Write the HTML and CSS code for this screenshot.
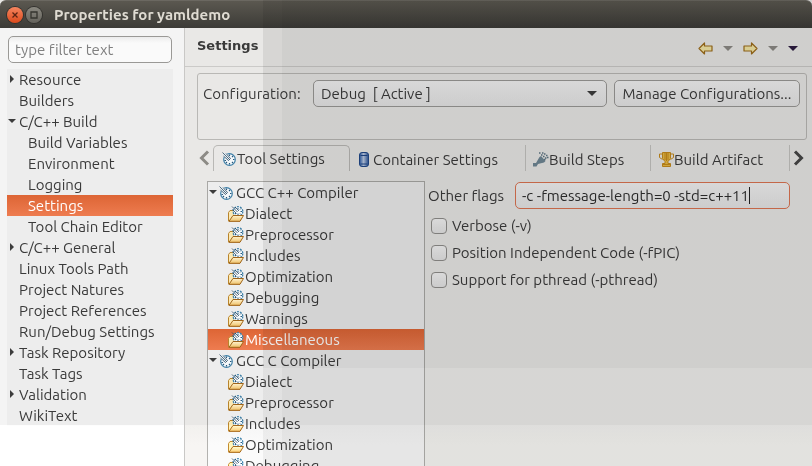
FILE: index.html
```html
<!DOCTYPE html>
<html lang="en">
<head>
    <meta charset="UTF-8">
    <meta name="viewport" content="width=device-width, initial-scale=1.0">
    <title>Properties for yamldemo</title>
    <link rel="stylesheet" href="styles.css">
</head>
<body>
    <!-- shared icons -->
    <svg width="0" height="0" class="sprite">
        <defs>
            <linearGradient id="paper" x1="0" y1="0" x2="0" y2="1">
                <stop offset="0" stop-color="#fff3cf"/>
                <stop offset="1" stop-color="#efc168"/>
            </linearGradient>
            <linearGradient id="can" x1="0" y1="0" x2="1" y2="0">
                <stop offset="0" stop-color="#2a5ca8"/>
                <stop offset=".45" stop-color="#b9c9e2"/>
                <stop offset="1" stop-color="#2a5499"/>
            </linearGradient>
            <symbol id="gauge" viewBox="0 0 14 14">
                <circle cx="7.5" cy="7.5" r="5.8" fill="#f4f8fa" stroke="#3f80a8" stroke-width="1.2"/>
                <path d="M7.5 2.5v1.5M7.5 11v1.5M2.5 8.5h1.5M11 7.5h1.5M4 11l1-1M10 10l1 1M10 5l1-1" stroke="#28587c" stroke-width="1.2"/>
                <path d="M1 1L5 1.5 9 6.500 6.500 9 1.500 4.500z" fill="#e4eef3"/>
                <path d="M.5.5L7.5 7.5M4 1.5L8.5 6.5M1.5 4L6.5 8.500M6.5 8.500L8.5 6.500" stroke="#2d4a62" stroke-width=".8" fill="none"/>
            </symbol>
            <symbol id="folder" viewBox="0 0 16 16">
                <path d="M.5 15V6.500l1.500-2h3l1 2h6V15z" fill="#fbe9b4" stroke="#b8842c"/>
                <circle cx="10" cy="5.500" r="4.800" fill="#f8fbfc" stroke="#3f80a8" stroke-width="1.300" stroke-dasharray="2 1"/>
                <path d="M10 2v1.500M10 7.500v1.500M12.500 5.500h1.500M12 3.500l1-1M12 7.500l1 1M7 7.500h1" stroke="#28587c"/>
                <path d="M4 .5L9.500 6M7 1L11 5M4.500 3.500L8.500 7.500" stroke="#2d4a62" stroke-width=".8" fill="none"/>
                <path d="M1 15.300L5 9.500h10.500L12 15.300z" fill="url(#paper)" stroke="#a0651a"/>
            </symbol>
            <symbol id="arrow" viewBox="0 0 15 13">
                <path d="M1 6.5L6.5 1v3H14v5H6.500v3z" fill="#f3e6a4" stroke="#9c6c1a" stroke-width="1.2" stroke-linejoin="round"/>
            </symbol>
        </defs>
    </svg>

    <header class="titlebar">
        <button class="win-btn close" aria-label="Close">
            <svg width="16" height="16" viewBox="0 0 16 16"><path d="M5.5 5.5l5 5M10.5 5.5l-5 5" stroke="#5c2413" stroke-width="1.3"/></svg>
        </button>
        <button class="win-btn" aria-label="Maximize">
            <svg width="16" height="16" viewBox="0 0 16 16"><path d="M5 5h6v6H5z" fill="none" stroke="#35342f" stroke-width="1.3"/></svg>
        </button>
        <h1>Properties for yamldemo</h1>
    </header>

    <div class="dialog">
        <aside class="sidebar">
            <input class="field filter" type="text" placeholder="type filter text" aria-label="Filter">
            <ul class="tree pages">
                <li class="closed">Resource</li>
                <li>Builders</li>
                <li class="open">C/C++ Build</li>
                <li class="child">Build Variables</li>
                <li class="child">Environment</li>
                <li class="child">Logging</li>
                <li class="child selected">Settings</li>
                <li class="child">Tool Chain Editor</li>
                <li class="closed">C/C++ General</li>
                <li>Linux Tools Path</li>
                <li>Project Natures</li>
                <li>Project References</li>
                <li>Run/Debug Settings</li>
                <li class="closed">Task Repository</li>
                <li>Task Tags</li>
                <li class="closed">Validation</li>
                <li>WikiText</li>
            </ul>
        </aside>

        <main class="content">
            <div class="page-head">
                <h2>Settings</h2>
                <div class="nav">
                    <button aria-label="Back"><svg width="15" height="13"><use href="#arrow"/></svg></button>
                    <button class="drop" aria-label="Back history"></button>
                    <button aria-label="Forward"><svg class="flip" width="15" height="13"><use href="#arrow"/></svg></button>
                    <button class="drop" aria-label="Forward history"></button>
                    <button class="drop dark" aria-label="Menu"></button>
                </div>
            </div>

            <div class="config">
                <label for="config">Configuration:</label>
                <div class="combo">
                    <select class="field" id="config">
                        <option>Debug&nbsp; [ Active ]</option>
                    </select>
                </div>
                <button class="field manage">Manage Configurations...</button>
            </div>

            <div class="tabs">
                <button class="scroll" aria-label="Previous tabs">
                    <svg width="11" height="16" viewBox="0 0 11 16"><path d="M9 1.5L2.5 8 9 14.5" fill="none" stroke="#8d8b86" stroke-width="3"/></svg>
                </button>
                <button class="tab active"><svg width="14" height="14"><use href="#gauge"/></svg>Tool Settings</button>
                <button class="tab container-tab">
                    <svg width="10" height="15" viewBox="0 0 10 15"><rect x=".5" y=".5" width="9" height="14" rx="2.5" fill="url(#can)" stroke="#1f4788"/><path d="M1.5 3.5h7M1.5 12h7" stroke="#1f4788"/></svg>
                    Container Settings
                </button>
                <button class="tab steps-tab">
                    <svg width="16" height="15" viewBox="0 0 16 15">
                        <path d="M0 14.5V11h3l3.5-6 1.5-1 4.5 5-1.5 1.5-6 1.5-1.5 2.5z" fill="#6f8794"/>
                        <path d="M6 1h1.5M9 1h1.5M8 3h1.5M11 2h1.5M10 4.5h1.5M13 3.5h1.5M12 6h1.5M14 5.5h1.5M11 7.5h1.5" stroke="#5d7482" stroke-width="1.4"/>
                    </svg>
                    Build Steps
                </button>
                <button class="tab artifact-tab">
                    <svg width="15" height="15" viewBox="0 0 15 15"><path d="M3.5.5h8v6L9 9.5v2h2.5v3h-8v-3H6v-2L3.5 6.5z" fill="#e8bb45" stroke="#c58a1b"/><path d="M3.5 2h-3v3.5l3 2M11.5 2h3v3.5l-3 2M6 1v7M9 1v7M7.5 1v8M4 12.5h7" fill="none" stroke="#c58a1b"/></svg>
                    Build Artifact
                </button>
                <button class="scroll next" aria-label="Next tabs">
                    <svg width="11" height="16" viewBox="0 0 11 16"><path d="M2 1.5L8.5 8 2 14.5" fill="none" stroke="#464646" stroke-width="3"/></svg>
                </button>
            </div>

            <div class="tool-settings">
                <ul class="tree tools">
                    <li class="open"><svg width="14" height="14"><use href="#gauge"/></svg>GCC C++ Compiler</li>
                    <li class="child"><svg width="16" height="16"><use href="#folder"/></svg>Dialect</li>
                    <li class="child"><svg width="16" height="16"><use href="#folder"/></svg>Preprocessor</li>
                    <li class="child"><svg width="16" height="16"><use href="#folder"/></svg>Includes</li>
                    <li class="child"><svg width="16" height="16"><use href="#folder"/></svg>Optimization</li>
                    <li class="child"><svg width="16" height="16"><use href="#folder"/></svg>Debugging</li>
                    <li class="child"><svg width="16" height="16"><use href="#folder"/></svg>Warnings</li>
                    <li class="child selected"><svg width="16" height="16"><use href="#folder"/></svg>Miscellaneous</li>
                    <li class="open"><svg width="14" height="14"><use href="#gauge"/></svg>GCC C Compiler</li>
                    <li class="child"><svg width="16" height="16"><use href="#folder"/></svg>Dialect</li>
                    <li class="child"><svg width="16" height="16"><use href="#folder"/></svg>Preprocessor</li>
                    <li class="child"><svg width="16" height="16"><use href="#folder"/></svg>Includes</li>
                    <li class="child"><svg width="16" height="16"><use href="#folder"/></svg>Optimization</li>
                    <li class="child"><svg width="16" height="16"><use href="#folder"/></svg>Debugging</li>
                </ul>

                <form class="options">
                    <div class="flags">
                        <label for="flags">Other flags</label>
                        <div class="field focused">
                            <input id="flags" type="text" value="-c -fmessage-length=0 -std=c++11">
                            <span class="caret"></span>
                        </div>
                    </div>
                    <label class="check"><input type="checkbox">Verbose (-v)</label>
                    <label class="check"><input type="checkbox">Position Independent Code (-fPIC)</label>
                    <label class="check"><input type="checkbox">Support for pthread (-pthread)</label>
                </form>
            </div>
        </main>
    </div>
    <div class="shade"></div>
    <div class="glow"></div>
</body>
</html>
```
FILE: styles.css
```css
* {
    box-sizing: border-box;
}

body {
    margin: 0;
    height: 100vh;
    overflow: hidden;
    position: relative;
    display: flex;
    flex-direction: column;
    background: #e9e8e6;
    color: #3a3a3a;
    font: 15px/21px Ubuntu, "Open Sans", sans-serif;
    font-variant-ligatures: none;
}

button, input, select {
    font: inherit;
    font-variant-ligatures: none;
    color: inherit;
    margin: 0;
}

button {
    padding: 0;
    border: 0;
    background: none;
}

svg {
    flex: none;
}

.sprite {
    position: absolute;
}

/* title bar */
.titlebar {
    flex: none;
    display: flex;
    align-items: center;
    gap: 3px;
    height: 28px;
    padding-left: 7px;
    border-radius: 6px 6px 0 0;
    background: linear-gradient(#5b5850, #3c3b37);
    border-top: 1px solid #6b6861;
}

.titlebar h1 {
    margin: 0 0 0 9px;
    font-size: 15px;
    color: #dfdbd2;
}

.win-btn {
    display: flex;
    width: 16px;
    height: 16px;
    border-radius: 50%;
    background: linear-gradient(#8a8880, #65635c);
    box-shadow: 0 0 0 1px #33322e;
}

.win-btn.close {
    background: linear-gradient(#f5855f, #dc4a1c);
}

.dialog {
    flex: 1;
    min-height: 0;
    display: grid;
    grid-template-columns: 185px 1fr;
}

/* left side */
.sidebar {
    padding: 8px 11px 0 7px;
    background: #f4f4f4;
    border-right: 1px solid #c9c8c6;
}

.field {
    height: 27px;
    border: 1px solid #9a9996;
    border-radius: 5px;
    background: linear-gradient(#f2f2f2, #e6e6e6);
}

.filter {
    display: block;
    width: 164px;
    margin: 0 0 6px 1px;
    padding: 0 6px;
    background: linear-gradient(#ececec, #fafafa 6px);
}

.filter::placeholder {
    color: #808080;
}

.tree {
    margin: 0;
    padding: 0;
    list-style: none;
    background: #ededed;
}

.tree li {
    position: relative;
    display: flex;
    align-items: center;
    height: 21px;
    white-space: nowrap;
}

.pages li {
    padding-left: 12px;
}

.pages .child {
    padding-left: 21px;
}

.tree .selected {
    background: linear-gradient(#dd6535, #ee7c50);
    color: #fff;
}

.tree .closed::before,
.tree .open::before {
    content: "";
    position: absolute;
    left: 3px;
    top: 6px;
    border: 4px solid transparent;
    border-left: 4px solid #3c3c3c;
    border-right: 0;
}

.tree .open::before {
    left: 1px;
    top: 8px;
    border: 4px solid transparent;
    border-top: 4px solid #3c3c3c;
    border-bottom: 0;
}

/* right side */
.content {
    min-width: 0;
    display: flex;
    flex-direction: column;
}

.page-head {
    flex: none;
    display: flex;
    justify-content: space-between;
    height: 39px;
    padding: 7px 14px 0 12px;
    border-bottom: 1px solid #cbcac8;
}

.page-head h2 {
    margin: 0;
    font: bold 13px/21px "DejaVu Sans", sans-serif;
}

.nav {
    display: flex;
    align-items: center;
    gap: 10px;
    height: 27px;
}

.nav svg {
    display: block;
}

.flip {
    transform: scaleX(-1);
}

.drop {
    border: 5px solid transparent;
    border-top-color: #8b8984;
    border-bottom: 0;
}

.drop.dark {
    border-top-color: #2c1c40;
}

.config {
    flex: none;
    display: flex;
    gap: 7px;
    height: 67px;
    margin: 6px 5px 5px 12px;
    padding: 6px 6px 6px 5px;
    border: 1px solid #b9b8b5;
    border-radius: 3px;
}

.config label {
    width: 103px;
    line-height: 27px;
}

.combo {
    flex: 1;
    position: relative;
}

.combo select {
    appearance: none;
    width: 100%;
    padding: 0 7px;
}

.combo::after {
    content: "";
    position: absolute;
    right: 10px;
    top: 11px;
    border: 5px solid transparent;
    border-top-color: #3c3c3c;
    border-bottom: 0;
    pointer-events: none;
}

.manage {
    width: 186px;
    white-space: nowrap;
}

/* tabs */
.tabs {
    flex: none;
    display: flex;
    height: 26px;
    padding: 0 6px 0 14px;
}

.tab {
    display: flex;
    align-items: center;
    gap: 4px;
    padding: 2px 0 0 8px;
    border-right: 1px solid #c4c3c0;
    white-space: nowrap;
}

.tab.active {
    width: 137px;
    gap: 1px;
    padding-top: 0;
    border: 1px solid #b9b8b5;
    border-bottom: 0;
    border-radius: 5px 5px 0 0;
}

.container-tab {
    width: 176px;
    padding-left: 9px;
}

.steps-tab {
    width: 125px;
    gap: 0;
    padding-left: 7px;
}

.artifact-tab {
    flex: 1;
    gap: 0;
}

.scroll {
    display: flex;
    align-items: center;
    width: 14px;
}

.scroll.next {
    width: 16px;
    justify-content: center;
}

.tool-settings {
    flex: 1;
    min-height: 0;
    display: flex;
    gap: 3px;
    padding: 10px 22px 0 22px;
}

.tools {
    width: 218px;
    border: 1px solid #a9a8a5;
    border-bottom: 0;
    overflow: hidden;
}

.tools li {
    gap: 3px;
    padding-left: 11px;
}

.tools .child {
    gap: 1px;
    padding-left: 20px;
}

.options {
    flex: 1;
    display: flex;
    flex-direction: column;
    align-items: flex-start;
}

.flags {
    display: flex;
    align-items: center;
    width: 100%;
    margin: 1px 0 3px;
}

.flags label {
    width: 87px;
}

.focused {
    flex: 1;
    display: flex;
    align-items: center;
    padding-left: 6px;
    border-color: #dc7452;
    color: #2e2e2e;
}

.focused input {
    field-sizing: content;
    padding: 0;
    border: 0;
    outline: 0;
    background: none;
}

.caret {
    width: 1px;
    height: 17px;
    background: #222;
}

.check {
    display: flex;
    align-items: center;
    gap: 5px;
    height: 27px;
    padding-left: 3px;
}

.check input {
    appearance: none;
    width: 16px;
    height: 16px;
    border: 1px solid #8f8e8b;
    border-radius: 4px;
    background: linear-gradient(#f4f4f4, #e4e4e4);
}

/* dimming over the dialog */
.shade,
.glow {
    position: absolute;
    inset: 0;
    pointer-events: none;
}

.shade {
    background: linear-gradient(90deg, transparent 263px, rgba(0, 0, 0, .08) 263px 282px, rgba(0, 0, 0, .11) 282px);
}

/* brightens the lower part, keeps the text dark */
.glow {
    mix-blend-mode: color-dodge;
    background:
        linear-gradient(transparent 368px, #080808 368px 425px, #111 425px, #151515 445px) 263px 0 no-repeat,
        linear-gradient(transparent 425px, #090909 425px, #0e0e0e 445px) 185px 0 no-repeat,
        linear-gradient(transparent 425px, #101010 425px, #1c1c1c 445px) 0 0 / 184px 100% no-repeat;
}
```
